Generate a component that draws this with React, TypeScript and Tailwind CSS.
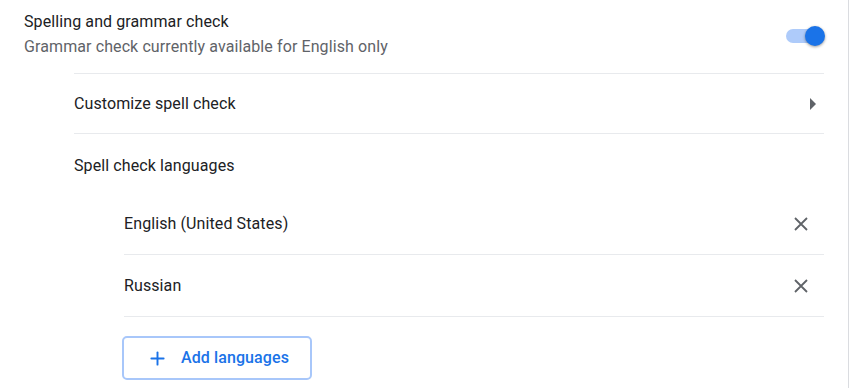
import { Plus } from "lucide-react";

const XIcon = () => (
  <svg width="14" height="14" viewBox="0 0 14 14" className="text-[#5f6368]">
    <path d="M1 1L13 13M13 1L1 13" stroke="currentColor" strokeWidth="1.8" />
  </svg>
);

const LanguageRow = ({ name, first, last }: { name: string; first?: boolean; last?: boolean }) => (
  <div
    className={`flex items-center justify-between border-[#e8eaed] pr-[13px] ${first ? "h-[60px]" : "h-[63px] border-t"} ${last ? "border-b" : ""}`}
  >
    <span>{name}</span>
    <button className="flex h-[20px] w-[20px] items-center justify-center">
      <XIcon />
    </button>
  </div>
);

const App = () => {
  return (
    <div
      className="w-[849px] h-[388px] overflow-hidden border-r border-[#dadce0] bg-white text-[16px] tracking-[0.1px] text-[#202124]"
      style={{ fontFamily: "Roboto, 'Liberation Sans', sans-serif" }}
    >
      <div className="flex h-[73px] items-center justify-between pl-[24px] pr-[24px] pb-[5px]">
        <div className="flex flex-col">
          <span className="leading-[25px]">Spelling and grammar check</span>
          <span className="leading-[25px] text-[#5f6368]">Grammar check currently available for English only</span>
        </div>
        <div className="relative mr-[-1px] mt-[3px] h-[20px] w-[40px]">
          <div className="absolute left-[1px] top-[3px] h-[14px] w-[34px] rounded-full bg-[#aecbfa]" />
          <div className="absolute right-0 top-0 h-[20px] w-[20px] rounded-full bg-[#1a73e8] shadow-[0_1px_3px_rgba(0,0,0,0.4)]" />
        </div>
      </div>

      <div className="ml-[74px] mr-[24px]">
        <div className="flex h-[60px] items-center justify-between border-t border-[#e8eaed] pr-[8px]">
          <span>Customize spell check</span>
          <svg width="6" height="12" viewBox="0 0 6 12" className="text-[#5f6368]">
            <path d="M0 0L6 6L0 12Z" fill="currentColor" />
          </svg>
        </div>
        <div className="flex h-[61px] items-center border-t border-[#e8eaed] pt-[3px]">
          <span>Spell check languages</span>
        </div>

        <div className="ml-[50px]">
          <LanguageRow name="English (United States)" first />
          <LanguageRow name="Russian" last />
          <div className="pt-[19px]">
            <button className="ml-[-2px] flex h-[44px] w-[190px] items-center justify-start gap-[13px] rounded-[5px] border-2 border-[#a8c7fa] pl-[23px] font-medium text-[#1a73e8]">
              <Plus size={21} strokeWidth={2.2} />
              <span>Add languages</span>
            </button>
          </div>
        </div>
      </div>
    </div>
  );
};

export default App;
